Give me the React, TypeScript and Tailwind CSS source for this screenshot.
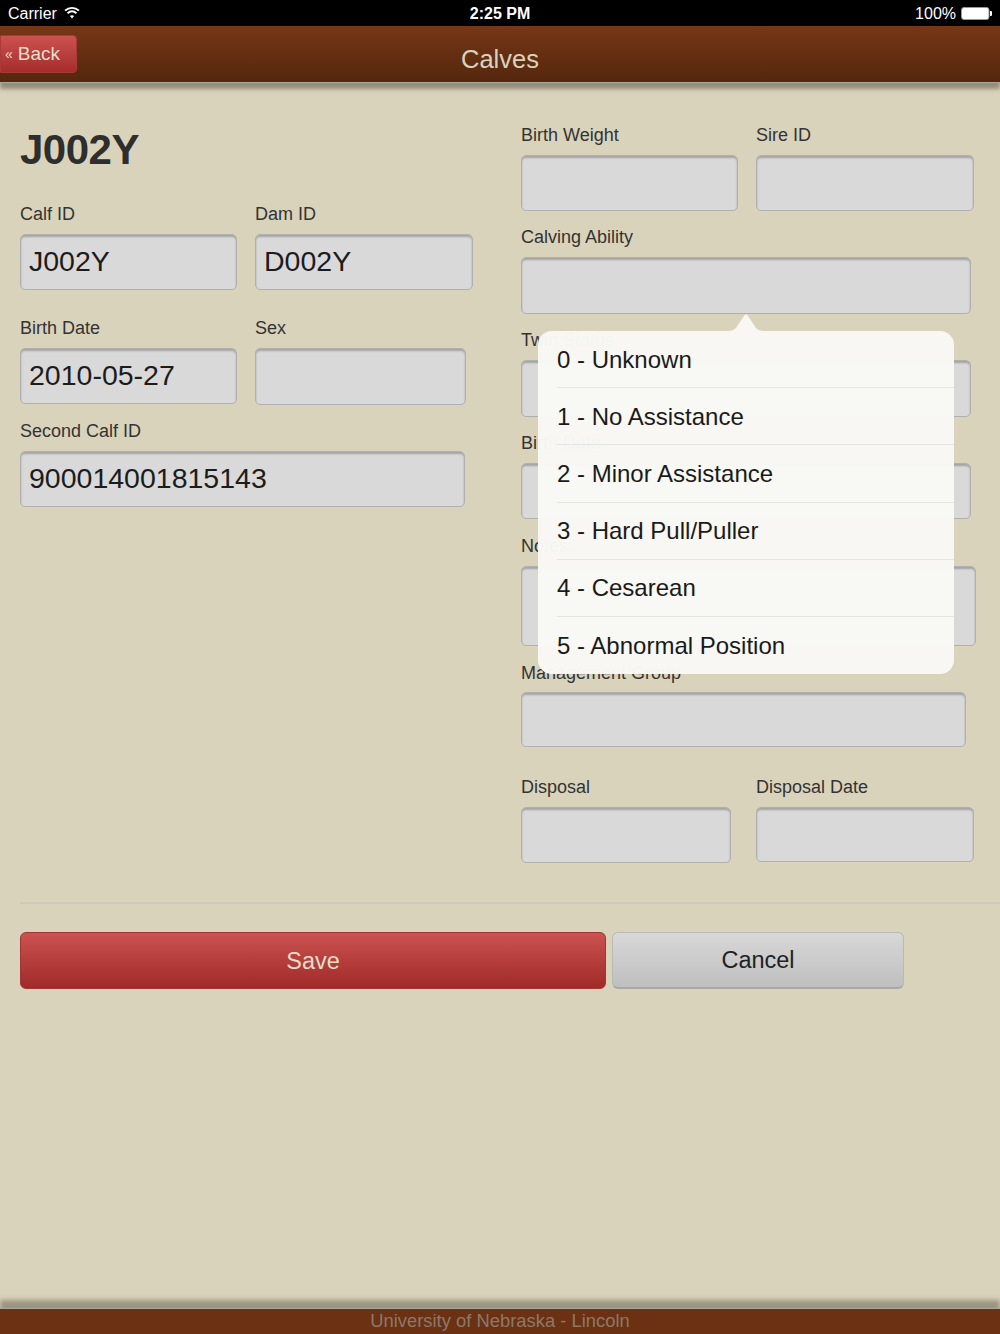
import React from "react";

const options = [
  "0 - Unknown",
  "1 - No Assistance",
  "2 - Minor Assistance",
  "3 - Hard Pull/Puller",
  "4 - Cesarean",
  "5 - Abnormal Position",
];

interface FieldProps {
  label: string;
  value?: string;
  className?: string;
  boxClass: string;
  gapClass?: string;
}

const Field: React.FC<FieldProps> = ({
  label,
  value,
  className = "",
  boxClass,
  gapClass = "mt-[10px]",
}) => (
  <div className={className}>
    <div className="h-5 text-[18px] leading-5 text-[#333]">{label}</div>
    <div
      className={`${gapClass} ${boxClass} flex items-center rounded-[5px] border-[1.5px] border-[#b0b0ae] bg-[#d9d9d9] pb-[2px] pl-2 text-[28.5px] text-[#1c1c1c] shadow-[inset_0_2px_2px_rgba(0,0,0,0.25)]`}
    >
      {value}
    </div>
  </div>
);

const StatusBar = () => (
  <div className="flex h-[26px] items-center justify-between bg-black pt-[2px] pr-2 pl-2 text-[16px] text-white">
    <div className="flex w-[300px] items-center gap-[7px]">
      <span>Carrier</span>
      <svg className="mb-[3px]" width="16" height="13" viewBox="0 0 16 13" fill="none" stroke="white" strokeWidth="1.9">
        <path d="M1 4.6C5 .9 11 .9 15 4.6" />
        <path d="M3.5 7.2c2.7-2.4 6.3-2.4 9 0" />
        <path d="M8 12.6 5.9 9.9c1.3-1 2.9-1 4.2 0z" fill="white" stroke="none" />
      </svg>
    </div>
    <span className="font-bold">2:25 PM</span>
    <div className="flex w-[300px] items-center justify-end gap-[5px]">
      <span>100%</span>
      <svg className="mb-[2px]" width="31" height="13" viewBox="0 0 31 13">
        <rect x="0.5" y="0.5" width="27.5" height="12" rx="2.5" fill="white" stroke="#999" />
        <path d="M29 4h1a1 1 0 0 1 1 1v3a1 1 0 0 1-1 1h-1z" fill="white" />
      </svg>
    </div>
  </div>
);

const Header = () => (
  <div className="relative z-10 flex h-[57px] shrink-0 items-center justify-between border-b border-[#a8a59a] bg-gradient-to-b from-[#773716] to-[#54270e] shadow-[0_6px_4px_rgba(60,55,40,0.45)]">
    <button className="flex h-[38px] w-[77px] items-center rounded-r-[4px] border border-[#a83a38] bg-gradient-to-b from-[#cc5250] to-[#a52c2b] pl-[4px] text-[19px] text-[#e6dfc9]">
      <span className="mr-[5px] text-[14px]">«</span>Back
    </button>
    <div className="pt-[10px] text-[25.5px] text-[#dad3bc]">Calves</div>
    <div className="w-[77px]" />
  </div>
);

const Popover = () => (
  <div className="absolute top-[248px] left-[538px] z-20 h-[343px] w-[416px]">
    <svg className="absolute -top-[17px] left-[190px]" width="36" height="17" viewBox="0 0 36 17">
      <path d="M0 17c4 0 6-1 8-3l8-12c1-2 3-2 4 0l8 12c2 2 4 3 8 3z" fill="#f8f8f5" fillOpacity="0.98" />
    </svg>
    <div className="h-full overflow-hidden rounded-[14px] bg-[#f8f8f5]/[0.98] pl-[19px]">
      {options.map((opt, i) => (
        <div
          key={opt}
          className={`flex h-[57.2px] items-center pt-[1px] text-[24px] text-[#1a1a1a] ${
            i < options.length - 1 ? "border-b border-[#e4e4e2]" : ""
          }`}
        >
          {opt}
        </div>
      ))}
    </div>
  </div>
);

export default function App() {
  return (
    <div className="relative flex h-[1334px] w-[1000px] flex-col overflow-hidden bg-[#dad3bc] font-['Liberation_Sans',sans-serif]">
      <StatusBar />
      <Header />

      <main className="relative flex-1">
        <div className="flex pt-[42px] pl-[20px]">
          <div className="w-[501px]">
            <h1 className="h-[50px] text-[42px] leading-[50px] font-bold tracking-[-0.5px] text-[#2e2e2e]">
              J002Y
            </h1>
            <div className="mt-[29px] flex">
              <Field label="Calf ID" value="J002Y" className="mr-[18px]" boxClass="h-[56px] w-[217px]" />
              <Field label="Dam ID" value="D002Y" boxClass="h-[56px] w-[218px]" />
            </div>
            <div className="mt-[28px] flex">
              <Field label="Birth Date" value="2010-05-27" className="mr-[18px]" boxClass="h-[56px] w-[217px]" />
              <Field label="Sex" boxClass="h-[57px] w-[211px]" />
            </div>
            <Field
              label="Second Calf ID"
              value="900014001815143"
              className="mt-[16px]"
              boxClass="h-[56px] w-[445px]"
            />
          </div>

          <div>
            <div className="flex">
              <Field label="Birth Weight" className="mr-[18px]" boxClass="h-[56px] w-[217px]" />
              <Field label="Sire ID" boxClass="h-[56px] w-[218px]" />
            </div>
            <Field label="Calving Ability" className="mt-[16px]" boxClass="h-[57px] w-[450px]" />
            <Field label="Twin Status" className="mt-[16px]" boxClass="h-[57px] w-[450px]" />
            <Field label="Birth Data" className="mt-[16px]" boxClass="h-[56px] w-[450px]" />
            <Field label="Notes:" className="mt-[17px]" boxClass="h-[80px] w-[455px]" />
            <Field
              label="Management Group"
              className="mt-[17px]"
              gapClass="mt-[9px]"
              boxClass="h-[55px] w-[445px]"
            />
            <div className="mt-[30px] flex">
              <Field label="Disposal" className="mr-[25px]" boxClass="h-[56px] w-[210px]" />
              <Field label="Disposal Date" boxClass="h-[55px] w-[218px]" />
            </div>
          </div>
        </div>

        <div className="mt-[39px] ml-[20px] h-[2px] bg-[#cfcbbb]" />

        <div className="mt-[28px] ml-[20px] flex gap-[6px]">
          <button className="h-[57px] w-[586px] rounded-[6px] border border-[#a03533] bg-gradient-to-b from-[#cb5250] to-[#a02a28] pt-[2px] text-[23.5px] text-[#e4ddc9]">
            Save
          </button>
          <button className="h-[57px] w-[292px] rounded-[6px] border border-[#b9b9b5] border-b-[2px] border-b-[#a8a8a6] bg-gradient-to-b from-[#d8d8d8] to-[#bfbfbf] pt-[2px] text-[23.5px] text-[#222]">
            Cancel
          </button>
        </div>

        <Popover />
      </main>

      <footer className="relative h-[26px] shrink-0 border-t border-[#a8a59a] bg-[#6b3112] text-center text-[18.4px] leading-[23px] text-[#8a7a6a] shadow-[0_-8px_5px_rgba(60,55,40,0.4)]">
        University of Nebraska - Lincoln
      </footer>
    </div>
  );
}
